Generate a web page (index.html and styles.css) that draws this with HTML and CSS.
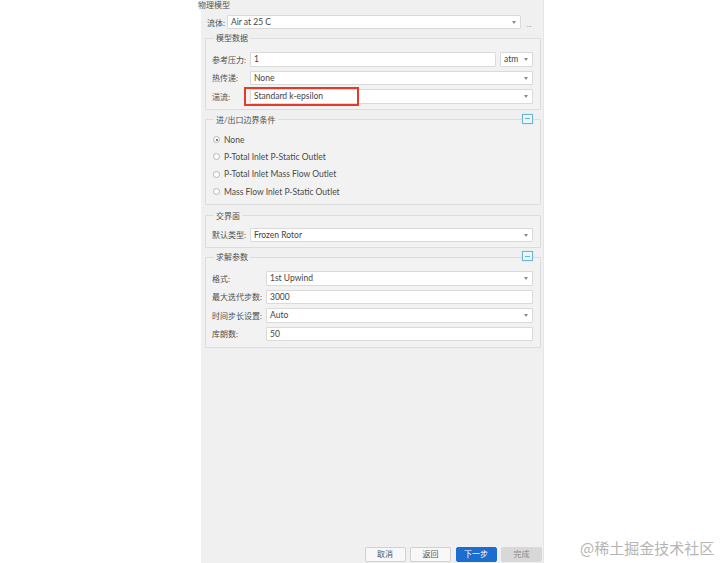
FILE: index.html
```html
<!DOCTYPE html>
<html lang="zh">
<head>
<meta charset="utf-8">
<title>物理模型</title>
<link rel="stylesheet" href="styles.css">
</head>
<body>
<div class="page">
  <div class="panel">
    <div class="content">
      <div class="title">物理模型</div>
      <div class="fluid-row">
        <span class="lbl">流体:</span>
        <div class="field select grow">Air at 25 C</div>
        <span class="more">...</span>
      </div>

      <fieldset class="group g1">
        <legend>模型数据</legend>
        <div class="rows">
          <div class="row">
            <span class="lbl w1">参考压力:</span>
            <div class="field grow">1</div>
            <div class="field select unit">atm</div>
          </div>
          <div class="row">
            <span class="lbl w1">热传递:</span>
            <div class="field select grow">None</div>
          </div>
          <div class="row mark-row">
            <span class="lbl w1">湍流:</span>
            <div class="field select grow">Standard k-epsilon</div>
            <div class="highlight"></div>
          </div>
        </div>
      </fieldset>

      <fieldset class="group g2">
        <legend>进/出口边界条件</legend>
        <span class="collapse"></span>
        <div class="radios">
          <div class="radio-row"><span class="radio checked"></span>None</div>
          <div class="radio-row"><span class="radio"></span>P-Total Inlet P-Static Outlet</div>
          <div class="radio-row"><span class="radio"></span>P-Total Inlet Mass Flow Outlet</div>
          <div class="radio-row"><span class="radio"></span>Mass Flow Inlet P-Static Outlet</div>
        </div>
      </fieldset>

      <fieldset class="group g3">
        <legend>交界面</legend>
        <div class="rows">
          <div class="row">
            <span class="lbl w1">默认类型:</span>
            <div class="field select grow">Frozen Rotor</div>
          </div>
        </div>
      </fieldset>

      <fieldset class="group g4">
        <legend>求解参数</legend>
        <span class="collapse"></span>
        <div class="rows">
          <div class="row">
            <span class="lbl w2">格式:</span>
            <div class="field select grow">1st Upwind</div>
          </div>
          <div class="row">
            <span class="lbl w2">最大迭代步数:</span>
            <div class="field grow">3000</div>
          </div>
          <div class="row">
            <span class="lbl w2">时间步长设置:</span>
            <div class="field select grow">Auto</div>
          </div>
          <div class="row">
            <span class="lbl w2">库朗数:</span>
            <div class="field grow">50</div>
          </div>
        </div>
      </fieldset>
    </div>

    <div class="buttons">
      <button class="btn">取消</button>
      <button class="btn">返回</button>
      <button class="btn primary">下一步</button>
      <button class="btn disabled">完成</button>
    </div>
  </div>
</div>
<div class="watermark">@稀土掘金技术社区</div>
</body>
</html>
```

FILE: styles.css
```css
html, body {
  margin: 0;
  padding: 0;
  background: #ffffff;
}

body {
  width: 720px;
  height: 563px;
  overflow: hidden;
  font-family: "Lato", "Noto Sans CJK SC", sans-serif;
  font-size: 8.5px;
  color: #4a4a4a;
  position: relative;
}

.page {
  display: flex;
  height: 563px;
  padding-left: 201px;
}

.panel {
  width: 343px;
  height: 563px;
  background: #f0f0f0;
  border-right: 1px solid #e6e6e6;
  display: flex;
  flex-direction: column;
  box-sizing: border-box;
}

.content {
  flex: 1;
  display: flex;
  flex-direction: column;
  padding: 0 2px 0 4px;
}

.title {
  height: 10px;
  line-height: 10px;
  margin-left: -7px;
  font-size: 8px;
  color: #555;
}

.fluid-row {
  display: flex;
  align-items: center;
  margin-top: 5px;
  height: 14px;
  padding-left: 2px;
  padding-right: 4px;
}

.fluid-row .lbl {
  width: 20px;
}

.more {
  width: 16px;
  text-align: center;
  color: #999;
  font-size: 7px;
  line-height: 14px;
  padding-top: 3px;
}

.lbl {
  flex: none;
  font-size: 8px;
  color: #505050;
  white-space: nowrap;
}

.w1 { width: 38px; }
.w2 { width: 54px; }

.field {
  position: relative;
  height: 14.5px;
  line-height: 13px;
  box-sizing: border-box;
  background: #ffffff;
  border: 1px solid #dadada;
  border-radius: 1px;
  padding-left: 3px;
  color: #444;
  white-space: nowrap;
}

.grow { flex: 1; }

.select::after {
  content: "";
  position: absolute;
  right: 4px;
  top: 5px;
  border-left: 2px solid transparent;
  border-right: 2px solid transparent;
  border-top: 3px solid #8a8a8a;
}

.unit {
  width: 33px;
  margin-left: 4px;
  flex: none;
}

.group {
  position: relative;
  margin: 0;
  border: 1px solid #dcdcdc;
  border-radius: 1px;
  min-width: 0;
  background: #f2f2f2;
}

.group legend {
  padding: 0 2px;
  margin-left: 2px;
  line-height: 10px;
  height: 10px;
  font-size: 8px;
  color: #505050;
}

.g1 { margin-top: 4px; padding: 9px 7px 5px 6px; }
.g2 { margin-top: 5px; padding: 9px 7px 6px 6px; }
.g3 { margin-top: 6px; padding: 7px 7px 5px 6px; }
.g4 { margin-top: 4px; padding: 9px 7px 6px 6px; }

.rows {
  display: flex;
  flex-direction: column;
  gap: 4px;
}

.row {
  display: flex;
  align-items: center;
}

.mark-row {
  position: relative;
}

.highlight {
  position: absolute;
  left: 32px;
  top: -2px;
  width: 115px;
  height: 18.5px;
  box-sizing: border-box;
  border: 2px solid #e23b2a;
}

.collapse {
  position: absolute;
  right: 7px;
  top: -11px;
  width: 11px;
  height: 10px;
  box-sizing: border-box;
  border: 1px solid #6ab4d6;
  background: #eef5f8;
  box-shadow: 0 0 2px #bfe3f0;
}

.collapse::after {
  content: "";
  position: absolute;
  left: 2px;
  right: 2px;
  top: 3.5px;
  height: 1px;
  background: #6ab4d6;
}

.radios {
  display: flex;
  flex-direction: column;
  gap: 5.4px;
}

.radio-row {
  display: flex;
  align-items: center;
  height: 12px;
  color: #4a4a4a;
}

.radio {
  width: 7px;
  height: 7px;
  box-sizing: border-box;
  border: 1px solid #b5b5b5;
  border-radius: 50%;
  background: #ffffff;
  margin-left: 1px;
  margin-right: 4px;
  position: relative;
}

.radio.checked::after {
  content: "";
  position: absolute;
  left: 1.5px;
  top: 1.5px;
  width: 2px;
  height: 2px;
  border-radius: 50%;
  background: #555;
}

.buttons {
  display: flex;
  justify-content: flex-end;
  gap: 4.5px;
  padding: 0 1px 1px 0;
}

.btn {
  width: 41px;
  height: 15px;
  padding: 0;
  font-family: inherit;
  font-size: 8px;
  line-height: 13px;
  border: 1px solid #d0d0d0;
  border-radius: 2px;
  background: #f8f8f8;
  color: #555;
}

.btn.primary {
  background: #1b6dcf;
  border-color: #1b6dcf;
  color: #ffffff;
}

.btn.disabled {
  background: #d8d8d8;
  border-color: #d8d8d8;
  color: #8a8a8a;
}

.watermark {
  position: absolute;
  left: 580px;
  top: 538px;
  font-size: 15px;
  line-height: 20px;
  color: #b4b4b4;
  font-family: "Noto Sans CJK SC", sans-serif;
  white-space: nowrap;
}
```
